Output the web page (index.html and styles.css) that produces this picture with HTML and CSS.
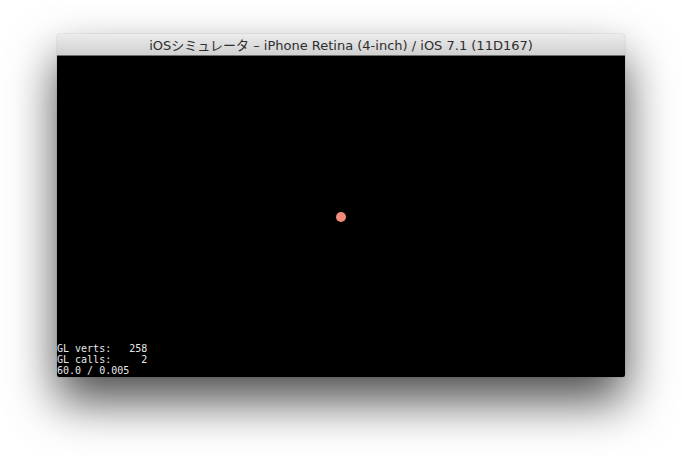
FILE: index.html
```html
<!DOCTYPE html>
<html lang="ja">
<head>
    <meta charset="UTF-8">
    <title>iOSシミュレータ</title>
    <link rel="stylesheet" href="styles.css">
</head>
<body>
    <div class="window">
        <div class="titlebar">iOSシミュレータ – iPhone Retina (4-inch) / iOS 7.1 (11D167)</div>
        <div class="screen">
            <div class="dot"></div>
            <pre class="stats">GL verts:   258
GL calls:     2
60.0 / 0.005</pre>
        </div>
    </div>
</body>
</html>
```

FILE: styles.css
```css
html {
    background: #fff;
}
body {
    margin: 0;
    padding: 34px 0 0 57px;
    min-height: 456px;
    box-sizing: border-box;
}
.window {
    width: 568px;
    border-radius: 4px 4px 2px 2px;
    overflow: hidden;
    box-shadow: 0 24px 48px rgba(0,0,0,0.7), 0 0 1px rgba(0,0,0,0.5);
}
.titlebar {
    height: 22px;
    line-height: 23px;
    text-align: center;
    font-family: "DejaVu Sans", "Noto Sans CJK JP", sans-serif;
    font-size: 13px;
    color: #2e2e2e;
    background: linear-gradient(#ececec, #d0d0d0);
    border-bottom: 1px solid #6e6e6e;
    box-sizing: border-box;
    white-space: nowrap;
}
.screen {
    height: 321px;
    background: #000;
    display: grid;
}
.dot {
    grid-area: 1 / 1;
    align-self: center;
    justify-self: center;
    width: 10px;
    height: 10px;
    border-radius: 50%;
    background: #f58a7c;
}
.stats {
    grid-area: 1 / 1;
    align-self: end;
    margin: 0;
    padding-bottom: 1px;
    font-family: "DejaVu Sans Mono", monospace;
    font-size: 10px;
    line-height: 11px;
    color: #e8e8e8;
}
```
